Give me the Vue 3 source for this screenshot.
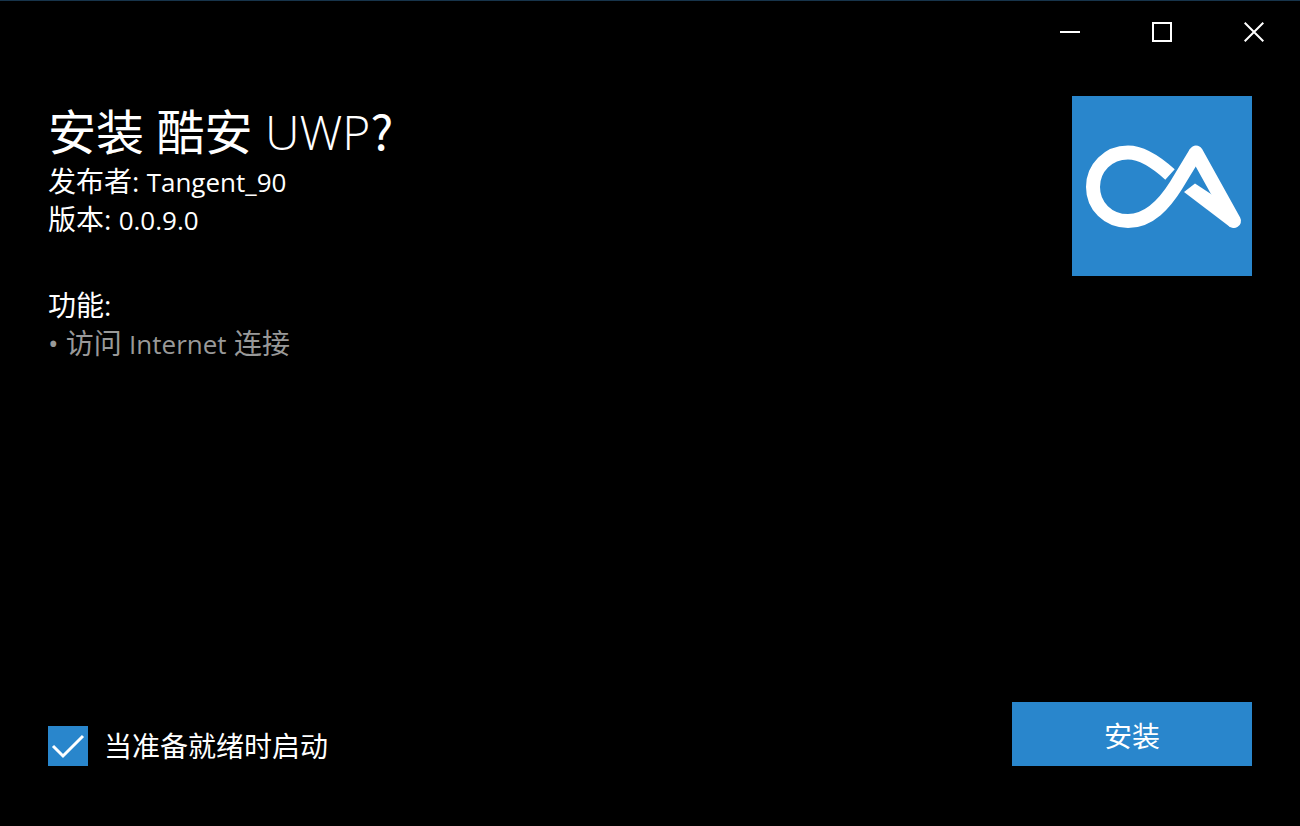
<script setup>
import { ref } from 'vue'

const launchWhenReady = ref(true)
</script>

<template>
  <div class="window">
    <header class="caption">
      <button type="button" class="caption-button" aria-label="最小化">
        <svg width="20" height="20" viewBox="0 0 20 20"><path d="M0 10H20" /></svg>
      </button>
      <button type="button" class="caption-button" aria-label="最大化">
        <svg width="20" height="20" viewBox="0 0 20 20"><path d="M1 1H19V19H1Z" /></svg>
      </button>
      <button type="button" class="caption-button" aria-label="关闭">
        <svg width="20" height="20" viewBox="0 0 20 20"><path d="M.7 .7L19.3 19.3M19.3 .7L.7 19.3" /></svg>
      </button>
    </header>

    <main class="content">
      <section class="details">
        <h1>安装 酷安 <span class="light">UWP</span><span class="mark">?</span></h1>
        <p>发布者: <span class="latin">Tangent_90</span></p>
        <p>版本: <span class="latin">0.0.9.0</span></p>
        <h2>功能:</h2>
        <ul>
          <li>访问 <span class="latin">Internet</span> 连接</li>
        </ul>
      </section>
      <svg class="logo" viewBox="0 0 180 180" role="img" aria-label="酷安">
        <path
          class="logo-line"
          d="M98 78.5C82 64 69 56.5 56 56.5C36 56.5 21 72 21 91C21 110 36 125 56 125C78 125 93 107 104 89.500L124 56.500"
        />
        <path class="logo-line rounded" d="M124 56.500L162 125" />
        <path class="logo-fill" d="M112 96L123 87.500L139 98L168 122L158 131Z" />
      </svg>
    </main>

    <footer class="actions">
      <label class="launch">
        <span class="box">
          <input v-model="launchWhenReady" type="checkbox" />
          <svg v-if="launchWhenReady" viewBox="0 0 40 40" aria-hidden="true"><path d="M5 20L15 30L35 10" /></svg>
        </span>
        当准备就绪时启动
      </label>
      <button type="button" class="install">安装</button>
    </footer>
  </div>
</template>

<style>
body {
  background: #000;
}
</style>

<style scoped>
.window {
  box-sizing: border-box;
  min-height: 100vh;
  display: flex;
  flex-direction: column;
  border-top: 1px solid #17344b;
  background: #000;
  color: #fff;
  font-family: "Open Sans", "Noto Sans CJK SC", sans-serif;
  font-size: 28px;
  line-height: 38px;
}

.caption {
  display: flex;
  justify-content: flex-end;
}

.caption-button {
  display: flex;
  align-items: center;
  justify-content: center;
  width: 92px;
  height: 62px;
  padding: 0;
  border: 0;
  background: transparent;
}

.caption-button path {
  fill: none;
  stroke: #fff;
  stroke-width: 2;
}

.content {
  flex: 1;
  display: flex;
  justify-content: space-between;
  align-items: flex-start;
  gap: 48px;
  padding: 33px 48px 0;
}

h1,
h2,
p,
ul {
  margin: 0;
  padding: 0;
  font-size: 28px;
  font-weight: 400;
}

h1 {
  padding-top: 6px;
  font-size: 48px;
  line-height: 60px;
}

.light {
  font-weight: 300;
}

.mark {
  font-family: "Noto Sans CJK SC", sans-serif;
  line-height: 1;
}

.latin {
  font-size: 26px;
  line-height: 1;
}

h2 {
  margin-top: 48px;
}

ul {
  list-style: none;
  color: #999;
}

li::before {
  content: "• ";
}

.logo {
  flex: none;
  width: 180px;
  height: 180px;
  background: #2986cc;
}

.logo-line {
  fill: none;
  stroke: #fff;
  stroke-width: 14;
}

.rounded {
  stroke-linecap: round;
}

.logo-fill {
  fill: #fff;
}

.actions {
  display: flex;
  justify-content: space-between;
  align-items: flex-end;
  padding: 0 48px 60px;
}

.launch {
  display: flex;
  align-items: center;
  gap: 16px;
  height: 40px;
}

.box {
  position: relative;
  width: 40px;
  height: 40px;
}

.box input {
  appearance: none;
  display: block;
  width: 40px;
  height: 40px;
  margin: 0;
  background: #2986cc;
}

.box svg {
  position: absolute;
  inset: 0;
  pointer-events: none;
}

.box path {
  fill: none;
  stroke: #fff;
  stroke-width: 3;
}

.install {
  width: 240px;
  height: 64px;
  padding: 4px 0 0;
  border: 0;
  background: #2986cc;
  color: #fff;
  font: inherit;
}
</style>
